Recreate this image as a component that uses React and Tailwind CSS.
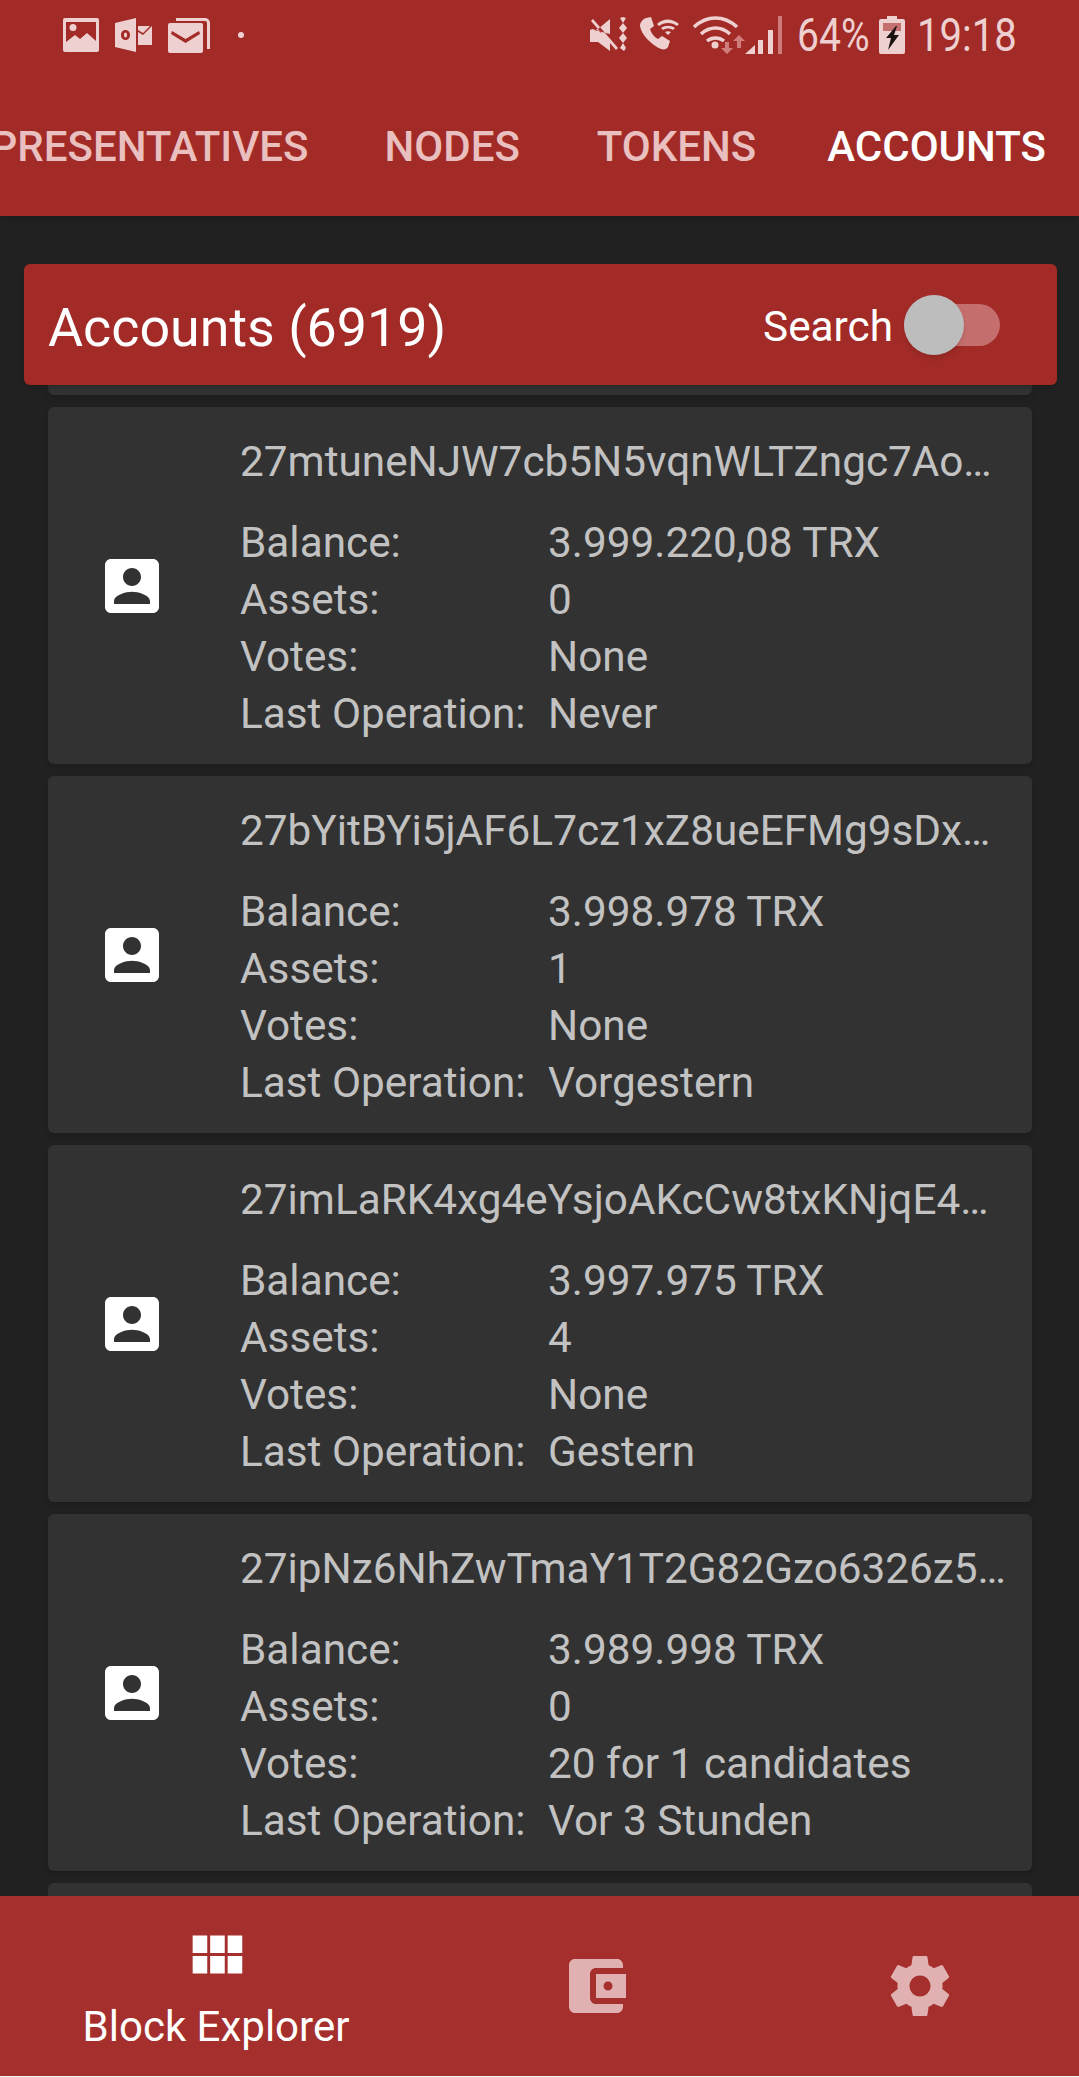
import React from "react";

const accounts = [
  { address: "27mtuneNJW7cb5N5vqnWLTZngc7Ao…", balance: "3.999.220,08 TRX", assets: "0", votes: "None", last: "Never" },
  { address: "27bYitBYi5jAF6L7cz1xZ8ueEFMg9sDx…", balance: "3.998.978 TRX", assets: "1", votes: "None", last: "Vorgestern" },
  { address: "27imLaRK4xg4eYsjoAKcCw8txKNjqE4…", balance: "3.997.975 TRX", assets: "4", votes: "None", last: "Gestern" },
  { address: "27ipNz6NhZwTmaY1T2G82Gzo6326z5…", balance: "3.989.998 TRX", assets: "0", votes: "20 for 1 candidates", last: "Vor 3 Stunden" },
];

// material icon paths
const accountBox = "M3 5v14c0 1.1.89 2 2 2h14c1.1 0 2-.9 2-2V5c0-1.1-.9-2-2-2H5c-1.11 0-2 .9-2 2zm12 4c0 1.66-1.34 3-3 3s-3-1.34-3-3 1.34-3 3-3 3 1.34 3 3zm-9 8c0-2 4-3.1 6-3.1s6 1.1 6 3.1v1H6v-1z";
const viewModule = "M4 11h5V5H4v6zm0 7h5v-6H4v6zm6 0h5v-6h-5v6zm6 0h5v-6h-5v6zm-6-7h5V5h-5v6zm6-6v6h5V5h-5z";
const wallet = "M21 18v1c0 1.1-.9 2-2 2H5c-1.11 0-2-.9-2-2V5c0-1.1.89-2 2-2h14c1.1 0 2 .9 2 2v1h-9c-1.11 0-2 .9-2 2v8c0 1.1.89 2 2 2h9zm-9-2h10V8H12v8zm4-2.5c-.83 0-1.5-.67-1.5-1.5s.67-1.5 1.5-1.5 1.5.67 1.5 1.5-.67 1.5-1.5 1.5z";
const gear = "M19.43 12.98c.04-.32.07-.64.07-.98s-.03-.66-.07-.98l2.11-1.65c.19-.15.24-.42.12-.64l-2-3.46c-.12-.22-.39-.3-.61-.22l-2.49 1c-.52-.4-1.08-.73-1.69-.98l-.38-2.65C14.46 2.18 14.25 2 14 2h-4c-.25 0-.46.18-.49.42l-.38 2.65c-.61.25-1.17.59-1.69.98l-2.49-1c-.23-.09-.49 0-.61.22l-2 3.46c-.13.22-.07.49.12.64l2.11 1.65c-.04.32-.07.65-.07.98s.03.66.07.98l-2.11 1.65c-.19.15-.24.42-.12.64l2 3.46c.12.22.39.3.61.22l2.49-1c.52.4 1.08.73 1.69.98l.38 2.65c.03.24.24.42.49.42h4c.25 0 .46-.18.49-.42l.38-2.65c.61-.25 1.17-.59 1.69-.98l2.49 1c.23.09.49 0 .61-.22l2-3.46c.12-.22.07-.49-.12-.64l-2.11-1.65zM12 15.5c-1.93 0-3.5-1.57-3.5-3.5s1.57-3.5 3.5-3.5 3.5 1.57 3.5 3.5-1.57 3.5-3.5 3.5z";

function MaterialIcon({ d, className }) {
  return (
    <svg viewBox="0 0 24 24" className={className} fill="currentColor">
      <path d={d} fillRule="evenodd" />
    </svg>
  );
}

function StatusBar() {
  return (
    <div className="h-[70px] flex items-center text-[#edd0cf] shrink-0">
      {/* notification icons */}
      <svg viewBox="0 0 36 34" className="ml-[63px] w-[36px] h-[34px]" fill="currentColor">
        <path fillRule="evenodd" d="M2 0h32a2 2 0 0 1 2 2v30a2 2 0 0 1-2 2H2a2 2 0 0 1-2-2V2a2 2 0 0 1 2-2zM3 4v20l9-7 5 4 7-6 9 8V4zm7 2a3.500 3.500 0 1 1 0 7 3.500 3.500 0 0 1 0-7z" />
      </svg>
      <svg viewBox="0 0 37 34" className="ml-[16px] w-[37px] h-[34px]" fill="currentColor">
        <path fillRule="evenodd" d="M0 5 21 0v34L0 29zm10.500 7c-2.800 0-4.500 2.200-4.500 5s1.700 5 4.500 5 4.500-2.200 4.500-5-1.700-5-4.500-5zm0 2.500c1 0 1.500 1 1.500 2.500s-.5 2.500-1.500 2.500-1.500-1-1.500-2.500.5-2.500 1.500-2.500z" />
        <path d="M23 8h12l-7 7-5-3zM23 14l5 3 9-9v19H23z" />
      </svg>
      <svg viewBox="0 0 42 36" className="ml-[16px] w-[42px] h-[36px]" fill="currentColor">
        <path d="M8 1h29a5 5 0 0 1 5 5v26h-3V6a2 2 0 0 0-2-2H8z" />
        <path fillRule="evenodd" d="M2 6h31a2 2 0 0 1 2 2v26a2 2 0 0 1-2 2H2a2 2 0 0 1-2-2V8a2 2 0 0 1 2-2zm2 8-1 3 14.500 9L32 17l-1-3-13.500 8z" />
      </svg>
      <div className="ml-[28px] w-[6px] h-[6px] rounded-full bg-[#edd0cf]" />

      {/* system icons */}
      <svg viewBox="0 0 41 38" className="ml-auto w-[41px] h-[38px]" fill="currentColor">
        <path d="M0 13h8L20 3v15zM0 14v12h8l12 9V24L6 13zM3 3 1 5l25 29 2-2z" />
        <path d="M33 1l3 1-3 5 4 5-4 5 4 5-4 5 3 5-2 3-4-3 3-5-4-5 4-5-4-5 4-5-3-5z" />
      </svg>
      <svg viewBox="0 0 39 38" className="ml-[9px] w-[39px] h-[38px]" fill="currentColor">
        <path d="M6 2 11 1l3 9-4 3c1 4 4 8 8 10l4-3 8 5-2 6c-1 2-4 3-7 2C11 29 1 18 0 10 0 6 3 3 6 2z" />
        <path d="M17 8c6-6 15-6 22 0l-2 2c-5-4-13-4-18 0zM21 12c4-3 10-3 14 0l-2 2c-3-2-7-2-10 0zM25 16c2-1 4-1 6 0l-3 3z" />
      </svg>
      <svg viewBox="0 0 56 38" className="ml-[13px] w-[56px] h-[38px]" fill="none">
        <path d="M2 11c13-12 30-12 43 0M9 18c9-8 20-8 29 0M15 25c5-4 12-4 17 0" stroke="currentColor" strokeWidth="3.500" />
        <circle cx="23" cy="29" r="3.500" fill="currentColor" />
        <path d="M33 26h4v6h4l-6 6-6-6h4z" fill="#cf7d7b" />
        <path d="M47 19l6 6h-4v7h-4v-7h-4z" fill="#cf7d7b" />
      </svg>
      <svg viewBox="0 0 37 38" className="ml-[-3px] w-[37px] h-[38px]">
        <path d="M0 38 10 29v9z" fill="#edd0cf" />
        <path d="M13 24h5v14h-5zM23 14h5v24h-5z" fill="#edd0cf" />
        <path d="M33 0h4v38h-4z" fill="#cf7d7b" />
      </svg>
      <span className="ml-[15px] w-[70px] text-[46px] leading-none whitespace-nowrap origin-left scale-x-[0.85]">64%</span>
      <svg viewBox="0 0 26 38" className="ml-[12px] w-[26px] h-[38px]">
        <path d="M8 0h10v3h6a2 2 0 0 1 2 2v31a2 2 0 0 1-2 2H2a2 2 0 0 1-2-2V5a2 2 0 0 1 2-2h6z" fill="#edd0cf" />
        <path d="M4 7h18v8H4z" fill="#c4706e" />
        <path d="M17 10 7 22h5l-3 12 11-15h-5l3-9z" fill="#1d1212" />
      </svg>
      <span className="ml-[12px] w-[97px] mr-[65px] text-[46px] leading-none whitespace-nowrap origin-left scale-x-[0.87]">19:18</span>
    </div>
  );
}

function Tabs() {
  return (
    <div className="h-[146px] pt-[6px] flex justify-end items-center overflow-hidden text-[42px] font-medium uppercase whitespace-nowrap pr-[33px] text-[#e9c0bf]">
      <span className="shrink-0">Representatives</span>
      <span className="shrink-0 ml-[76px]">Nodes</span>
      <span className="shrink-0 ml-[77px]">Tokens</span>
      <span className="shrink-0 ml-[71px] text-white">Accounts</span>
    </div>
  );
}

function Row({ label, value }) {
  return (
    <div className="flex h-[57px] items-center">
      <span className="w-[308px] shrink-0">{label}</span>
      <span>{value}</span>
    </div>
  );
}

function AccountCard({ account }) {
  return (
    <div className="h-[357px] shrink-0 bg-[#323232] rounded-md shadow-md flex items-center pl-[48px] pr-[24px]">
      <MaterialIcon d={accountBox} className="w-[72px] h-[72px] text-white shrink-0" />
      <div className="ml-[72px] mt-[4px] min-w-0 flex-1 text-[42.3px] leading-[57px] text-[#c2c2c2]">
        <div className="pb-[24px] whitespace-nowrap">{account.address}</div>
        <Row label="Balance:" value={account.balance} />
        <Row label="Assets:" value={account.assets} />
        <Row label="Votes:" value={account.votes} />
        <Row label="Last Operation:" value={account.last} />
      </div>
    </div>
  );
}

export default function App() {
  return (
    <div className="w-[1079px] h-[2077px] flex flex-col bg-[#212121] overflow-hidden font-[Roboto]">
      <header className="h-[216px] bg-[#a22b27] shrink-0 shadow-md z-10">
        <StatusBar />
        <Tabs />
      </header>

      <main className="flex-1 min-h-0 overflow-hidden pt-[48px]">
        {/* title bar */}
        <div className="relative z-10 ml-[24px] w-[1033px] h-[121px] bg-[#a22b28] rounded-md shadow-md flex items-center pl-[24px] pr-[57px]">
          <h1 className="pt-[6px] text-[53.8px] text-white leading-none">Accounts (6919)</h1>
          <span className="ml-auto pt-[6px] text-[42.3px] leading-none text-white">Search</span>
          <div className="relative ml-[11px] w-[96px] h-[42px] rounded-full bg-[#c46e6d]">
            <div className="absolute left-[0px] top-[-9px] w-[60px] h-[60px] rounded-full bg-[#bdbdbd] shadow-md" />
          </div>
        </div>

        {/* account list */}
        <div className="ml-[48px] mr-[47px] flex flex-col gap-[12px]">
          <div className="h-[10px] bg-[#323232] rounded-b-md shadow-md" />
          {accounts.map((a) => (
            <AccountCard key={a.address} account={a} />
          ))}
          <div className="h-[100px] bg-[#323232] rounded-md" />
        </div>
      </main>

      {/* bottom nav */}
      <nav className="h-[180px] shrink-0 bg-[#a52f2c] flex items-center text-[#e0b1b0] relative z-10">
        <div className="w-[432px] flex flex-col items-center text-white">
          <MaterialIcon d={viewModule} className="w-[70px] h-[70px]" />
          <span className="pt-[10px] text-[42px] leading-[51px]">Block Explorer</span>
        </div>
        <div className="w-[328px] flex justify-center">
          <MaterialIcon d={wallet} className="w-[72px] h-[72px]" />
        </div>
        <div className="w-[319px] flex justify-center">
          <MaterialIcon d={gear} className="w-[72px] h-[72px]" />
        </div>
      </nav>
      <div className="h-px shrink-0 bg-[#f5f5f5]" />
    </div>
  );
}
